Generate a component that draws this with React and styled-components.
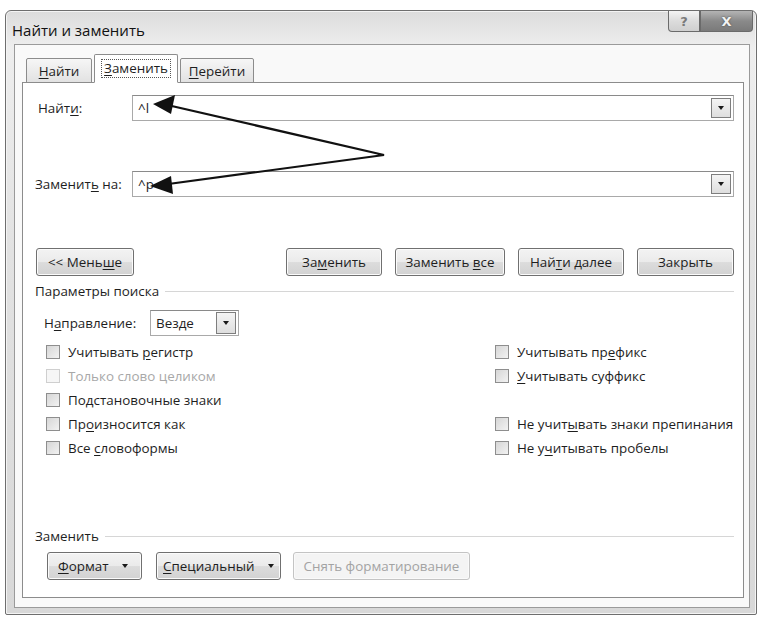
import React from "react";
import styled, { createGlobalStyle } from "styled-components";

const GlobalStyle = createGlobalStyle`
  html, body {
    margin: 0;
    padding: 0;
    background: #ffffff;
  }
  body {
    font-family: "Open Sans", "Noto Sans", "DejaVu Sans", sans-serif;
    font-size: 13.4px;
    color: #1e1e1e;
  }
`;

const Page = styled.div`
  width: 769px;
  height: 629px;
  padding: 10px 0 0 5px;
  box-sizing: border-box;
`;

const Window = styled.div`
  width: 752px;
  height: 605px;
  box-sizing: border-box;
  border: 1px solid #6e6e6e;
  border-radius: 6px 6px 2px 2px;
  background: linear-gradient(180deg, #dcdcdc 0%, #eeeeee 6%, #e2e2e2 40%, #d8d8d8 100%);
  display: flex;
  flex-direction: column;
  padding: 0 6px 6px 8px;
  box-shadow: inset 0 0 0 1px #f4f4f4;
`;

const TitleBar = styled.div`
  height: 33px;
  display: flex;
  align-items: flex-start;
  justify-content: space-between;
`;

const Title = styled.div`
  padding: 9px 0 0 0;
  margin-left: -2px;
  font-size: 15px;
  color: #111;
`;

const Caption = styled.div`
  display: flex;
  margin-right: -3px;
`;

const CaptionButton = styled.div`
  width: ${(p) => p.$w}px;
  height: 21px;
  box-sizing: border-box;
  border: 1px solid #6a6a6a;
  border-top: none;
  display: flex;
  align-items: center;
  justify-content: center;
  font-family: "DejaVu Sans", sans-serif;
  font-weight: bold;
  font-size: 13px;
  color: ${(p) => (p.$dark ? "#f2f2f2" : "#7a7a7a")};
  background: ${(p) =>
    p.$dark
      ? "linear-gradient(180deg, #b4b4b4 0%, #8a8a8a 50%, #7a7a7a 100%)"
      : "linear-gradient(180deg, #f4f4f4 0%, #dcdcdc 50%, #cfcfcf 100%)"};
  border-radius: ${(p) => p.$radius};
  text-shadow: ${(p) => (p.$dark ? "0 0 2px #444" : "none")};
`;

const Client = styled.div`
  flex: 1;
  background: #f9f9f9;
  border: 1px solid #9a9a9a;
  display: flex;
  flex-direction: column;
  padding: 9px 5px 9px 7px;
`;

const TabStrip = styled.div`
  display: flex;
  align-items: flex-end;
  padding-left: 4px;
  height: 29px;
  position: relative;
  z-index: 1;
  margin-bottom: -1px;
`;

const Tab = styled.div`
  width: ${(p) => p.$w}px;
  height: ${(p) => (p.$active ? 29 : 25)}px;
  box-sizing: border-box;
  margin: 0 ${(p) => (p.$active ? 2 : 0)}px;
  display: flex;
  align-items: center;
  justify-content: center;
  border: 1px solid #8c8c8c;
  border-bottom: ${(p) => (p.$active ? "1px solid #ffffff" : "1px solid #8c8c8c")};
  border-radius: 2px 2px 0 0;
  background: ${(p) =>
    p.$active ? "#ffffff" : "linear-gradient(180deg, #f6f6f6 0%, #e2e2e2 100%)"};
  color: #1e1e1e;
`;

const ActiveLabel = styled.span`
  border: 1px dotted #555;
  padding: 0 2px;
  line-height: 17px;
`;

const Panel = styled.div`
  flex: 1;
  position: relative;
  background: #ffffff;
  border: 1px solid #8c8c8c;
  display: flex;
  flex-direction: column;
  padding: 12px 9px 0 11px;
`;

const FieldRow = styled.div`
  display: flex;
  align-items: center;
  height: 26px;
  margin: ${(p) => p.$m || 0};
`;

const FieldLabel = styled.div`
  width: ${(p) => p.$w || 98}px;
  padding-left: ${(p) => p.$pl || 0}px;
  box-sizing: border-box;
`;

const Combo = styled.div`
  flex: ${(p) => (p.$w ? "none" : 1)};
  width: ${(p) => (p.$w ? `${p.$w}px` : "auto")};
  height: 26px;
  box-sizing: border-box;
  border: 1px solid #a9a9a9;
  border-top-color: #8a8a8a;
  display: flex;
  align-items: center;
  justify-content: space-between;
  padding: 0 2px 0 5px;
  background: #fff;
`;

const DropButton = styled.div`
  width: 20px;
  height: ${(p) => p.$h || 20}px;
  box-sizing: border-box;
  border: 1px solid #7e7e7e;
  background: linear-gradient(180deg, #f4f4f4 0%, #dedede 100%);
  display: flex;
  align-items: center;
  justify-content: center;
`;

const Arrow = styled.span`
  width: 0;
  height: 0;
  border-left: 3.5px solid transparent;
  border-right: 3.5px solid transparent;
  border-top: 4px solid #1a1a1a;
`;

const ButtonRow = styled.div`
  display: flex;
  align-items: center;
  gap: ${(p) => p.$gap || 13}px;
  margin: ${(p) => p.$m || 0};
`;

const Button = styled.div`
  width: ${(p) => p.$w}px;
  height: 28px;
  box-sizing: border-box;
  border: 1px solid ${(p) => (p.$disabled ? "#c4c4c4" : "#707070")};
  border-radius: 3px;
  background: ${(p) =>
    p.$disabled
      ? "#f4f4f4"
      : "linear-gradient(180deg, #f3f3f3 0%, #ebebeb 48%, #dcdcdc 52%, #d2d2d2 100%)"};
  box-shadow: inset 0 0 0 1px ${(p) => (p.$disabled ? "#fafafa" : "#fbfbfb")};
  display: flex;
  align-items: center;
  justify-content: ${(p) => p.$justify || "center"};
  gap: 14px;
  padding: 0 ${(p) => p.$px || 0}px;
  color: ${(p) => (p.$disabled ? "#a3a3a3" : "#1e1e1e")};
  margin-left: ${(p) => p.$ml || 0}px;
  white-space: nowrap;
`;

const SmallArrow = styled.span`
  width: 0;
  height: 0;
  border-left: 3px solid transparent;
  border-right: 3px solid transparent;
  border-top: 4px solid #1a1a1a;
`;

const Group = styled.div`
  display: flex;
  align-items: center;
  gap: 6px;
  margin: ${(p) => p.$m};
  color: #1e1e1e;
`;

const GroupLine = styled.div`
  flex: 1;
  height: 1px;
  background: #d6d6d6;
`;

const Options = styled.div`
  display: grid;
  grid-template-columns: 449px 1fr;
  grid-auto-rows: 24px;
  margin-top: 4px;
  padding-left: 12px;
`;

const Check = styled.label`
  display: flex;
  align-items: center;
  gap: 8px;
  white-space: nowrap;
  color: ${(p) => (p.$disabled ? "#a8a8a8" : "#1e1e1e")};
`;

const Box = styled.span`
  width: 14px;
  height: 14px;
  flex: none;
  box-sizing: border-box;
  border: 1px solid ${(p) => (p.$disabled ? "#cfcfcf" : "#8e8e8e")};
  background: ${(p) =>
    p.$disabled ? "#f6f6f6" : "linear-gradient(135deg, #d6d6d6 0%, #f2f2f2 100%)"};
`;

const U = styled.u`
  text-decoration-thickness: 1px;
  text-underline-offset: 2px;
`;

const Spacer = styled.div`
  flex: 1;
`;

const Annotation = styled.svg`
  position: absolute;
  left: 0;
  top: 0;
  pointer-events: none;
`;

const left = [
  { text: ["Учитывать ", "р", "егистр"] },
  { text: ["Только слово целиком"], disabled: true },
  { text: ["Подстановочные знаки"] },
  { text: ["Пр", "о", "износится как"] },
  { text: ["Все ", "с", "ловоформы"] },
];

const right = [
  { text: ["Учитывать пр", "е", "фикс"] },
  { text: ["", "У", "читывать суффикс"] },
  null,
  { text: ["Не учит", "ы", "вать знаки препинания"] },
  { text: ["Не у", "ч", "итывать пробелы"] },
];

const Label = ({ parts }) =>
  parts.length === 1 ? (
    <span>{parts[0]}</span>
  ) : (
    <span>
      {parts[0]}
      <U>{parts[1]}</U>
      {parts[2]}
    </span>
  );

const Option = ({ item }) =>
  item ? (
    <Check $disabled={item.disabled}>
      <Box $disabled={item.disabled} />
      <Label parts={item.text} />
    </Check>
  ) : (
    <div />
  );

export default function App() {
  return (
    <Page>
      <GlobalStyle />
      <Window>
        <TitleBar>
          <Title>Найти и заменить</Title>
          <Caption>
            <CaptionButton $w={32} $radius="0 0 0 4px">?</CaptionButton>
            <CaptionButton $w={53} $dark $radius="0 0 4px 0">X</CaptionButton>
          </Caption>
        </TitleBar>
        <Client>
          <TabStrip>
            <Tab $w={66}>
              <span>
                <U>Н</U>айти
              </span>
            </Tab>
            <Tab $w={84} $active>
              <ActiveLabel>
                <U>З</U>аменить
              </ActiveLabel>
            </Tab>
            <Tab $w={74}>
              <span>
                <U>П</U>ерейти
              </span>
            </Tab>
          </TabStrip>
          <Panel>
            <Annotation width="740" height="140">
              <polyline
                points="140,21 361,72 138,102"
                fill="none"
                stroke="#111"
                strokeWidth="2.2"
              />
              <path d="M130 21 L152 12 L148 31 Z" fill="#111" />
              <path d="M127 103 L148 93 L150 111 Z" fill="#111" />
            </Annotation>

            <FieldRow $m="0 0 50px 0">
              <FieldLabel $pl={4}>
                <span>
                  Найт<U>и</U>:
                </span>
              </FieldLabel>
              <Combo>
                <span>^l</span>
                <DropButton>
                  <Arrow />
                </DropButton>
              </Combo>
            </FieldRow>
            <FieldRow $m="0 0 51px 0">
              <FieldLabel $pl={1}>
                <span>
                  Заменит<U>ь</U> на:
                </span>
              </FieldLabel>
              <Combo>
                <span>^p</span>
                <DropButton>
                  <Arrow />
                </DropButton>
              </Combo>
            </FieldRow>

            <ButtonRow>
              <Button $w={98} $ml={2}>
                <span>
                  {"<< Мень"}
                  <U>ш</U>е
                </span>
              </Button>
              <Spacer />
              <Button $w={96}>
                <span>
                  За<U>м</U>енить
                </span>
              </Button>
              <Button $w={110}>
                <span>
                  Заменить <U>в</U>се
                </span>
              </Button>
              <Button $w={106}>
                <span>
                  Най<U>т</U>и далее
                </span>
              </Button>
              <Button $w={97}>
                <span>Закрыть</span>
              </Button>
            </ButtonRow>

            <Group $m="6px 0 0 1px">
              <span>Параметры поиска</span>
              <GroupLine />
            </Group>

            <FieldRow $m="10px 0 0 0">
              <FieldLabel $w={116} $pl={10}>
                <span>
                  Н<U>а</U>правление:
                </span>
              </FieldLabel>
              <Combo $w={89}>
                <span>Везде</span>
                <DropButton $h={22}>
                  <Arrow />
                </DropButton>
              </Combo>
            </FieldRow>

            <Options>
              {left.map((item, i) => (
                <React.Fragment key={i}>
                  <Option item={item} />
                  <Option item={right[i]} />
                </React.Fragment>
              ))}
            </Options>

            <Spacer />

            <Group $m="0 0 0 1px">
              <span>Заменить</span>
              <GroupLine />
            </Group>
            <ButtonRow $gap={14} $m="7px 0 17px 13px">
              <Button $w={95} $justify="flex-start" $px={10}>
                <span>
                  <U>Ф</U>ормат
                </span>
                <SmallArrow />
              </Button>
              <Button $w={125} $justify="flex-start" $px={6}>
                <span>
                  <U>С</U>пециальный
                </span>
                <SmallArrow />
              </Button>
              <Button $w={177} $ml={-2} $disabled>
                <span>Снять форматирование</span>
              </Button>
            </ButtonRow>
          </Panel>
        </Client>
      </Window>
    </Page>
  );
}
